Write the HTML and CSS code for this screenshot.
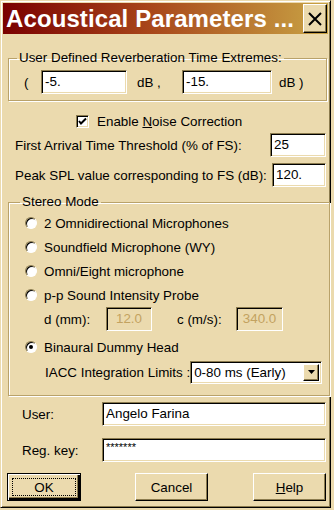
FILE: index.html
```html
<!DOCTYPE html>
<html lang="en">
<head>
    <meta charset="UTF-8">
    <meta name="viewport" content="width=device-width, initial-scale=1.0">
    <title>Acoustical Parameters</title>
    <link rel="stylesheet" href="styles.css">
</head>
<body>
<div class="window">
    <div class="titlebar">
        <span class="title">Acoustical Parameters ...</span>
        <span class="close-btn">
            <svg width="14" height="14" viewBox="0 0 14 14"><path d="M1 1 L13 13 M13 1 L1 13" stroke="#000" stroke-width="2" fill="none"/></svg>
        </span>
    </div>

    <div class="dialog">
        <fieldset class="group reverb">
            <legend>User Defined Reverberation Time Extremes:</legend>
            <div class="reverb-row">
                <span class="paren">(</span>
                <div class="edit rt-min">-5.</div>
                <span class="unit">dB ,</span>
                <div class="edit rt-max">-15.</div>
                <span class="unit unit-last">dB )</span>
            </div>
        </fieldset>

        <div class="check-row">
            <span class="checkbox">
                <svg width="9" height="9" viewBox="0 0 9 9"><path d="M1 4 L3 6.5 L8 1.5" stroke="#000" stroke-width="2" fill="none"/></svg>
            </span>
            <span class="check-label">Enable <u>N</u>oise Correction</span>
        </div>

        <div class="field-row first-row">
            <span>First Arrival Time Threshold (% of FS):</span>
            <div class="edit threshold">25</div>
        </div>
        <div class="field-row second-row">
            <span>Peak SPL value corresponding to FS (dB):</span>
            <div class="edit peak">120.</div>
        </div>

        <fieldset class="group stereo">
            <legend>Stereo Mode</legend>
            <div class="radio-row"><span class="radio"></span><span class="radio-label">2 Omnidirectional Microphones</span></div>
            <div class="radio-row"><span class="radio"></span><span class="radio-label">Soundfield Microphone (WY)</span></div>
            <div class="radio-row"><span class="radio"></span><span class="radio-label">Omni/Eight microphone</span></div>
            <div class="radio-row"><span class="radio"></span><span class="radio-label">p-p Sound Intensity Probe</span></div>
            <div class="probe-row">
                <span class="probe-label">d (mm):</span>
                <div class="edit disabled d-mm">12.0</div>
                <span class="probe-label c-label">c (m/s):</span>
                <div class="edit disabled c-ms">340.0</div>
            </div>
            <div class="radio-row binaural"><span class="radio checked"></span><span class="radio-label">Binaural Dummy Head</span></div>
            <div class="iacc-row">
                <span>IACC Integration Limits :</span>
                <div class="combo">
                    <span class="combo-text">0-80 ms (Early)</span>
                    <span class="combo-btn">
                        <svg width="7" height="4" viewBox="0 0 7 4"><path d="M0 0 H7 L3.5 4 Z" fill="#000"/></svg>
                    </span>
                </div>
            </div>
        </fieldset>

        <div class="field-row user-row">
            <span class="user-label">User:</span>
            <div class="edit user-edit">Angelo Farina</div>
        </div>
        <div class="field-row key-row">
            <span class="user-label">Reg. key:</span>
            <div class="edit user-edit key-edit">*******</div>
        </div>

        <div class="buttons">
            <button class="btn default"><span class="focus">OK</span></button>
            <button class="btn cancel">Cancel</button>
            <button class="btn help"><u>H</u>elp</button>
        </div>
    </div>
</div>
</body>
</html>
```

FILE: styles.css
```css
body {
    margin: 0;
    background: #ebdaae;
    font-family: 'Liberation Sans', Arial, sans-serif;
    font-size: 13.4px;
    color: #000;
    white-space: nowrap;
}

.window {
    width: 331px;
    height: 508px;
    box-sizing: border-box;
    border: 1px solid;
    border-color: #ebdaae #000 #000 #ebdaae;
    box-shadow: inset 1px 1px 0 #fff, inset -1px -1px 0 #8b7b4e;
    padding: 2px;
}

/* Title bar */
.titlebar {
    height: 31px;
    display: flex;
    align-items: center;
    padding-left: 3px;
    background: linear-gradient(to right, #7a0000, #a8461a 45%, #c9a445);
}

.title {
    flex: 1;
    color: #fff;
    font-weight: bold;
    font-size: 24px;
    letter-spacing: 0.1px;
}

.close-btn {
    width: 24px;
    height: 29px;
    box-sizing: border-box;
    margin-right: 1px;
    display: flex;
    align-items: center;
    justify-content: center;
    background: #ebdaae;
    border: 1px solid;
    border-color: #fff #000 #000 #fff;
    box-shadow: inset -1px -1px 0 #8b7b4e;
}

.dialog {
    display: flex;
    flex-direction: column;
}

/* Group boxes */
.group {
    margin: 0 1px 0 5px;
    padding: 0;
    border: 1px solid #b9a26a;
    box-shadow: inset 1px 1px 0 #fff, 1px 1px 0 #fff;
}

.group legend {
    margin-left: 8px;
    padding: 0 2px;
    line-height: 16px;
}

.reverb {
    margin-top: 16px;
    padding: 4px 0 6px;
}

.reverb-row {
    display: flex;
    align-items: center;
    height: 24px;
}

.paren {
    width: 17px;
    margin-left: 15px;
}

.unit {
    width: 45px;
    padding-left: 10px;
}

.unit-last {
    padding-left: 7px;
}

/* Edit boxes */
.edit {
    box-sizing: border-box;
    height: 24px;
    padding: 2px 3px;
    line-height: 18px;
    background: #fff;
    border: 1px solid;
    border-color: #8b7b4e #fff #fff #8b7b4e;
    box-shadow: inset 1px 1px 0 #000, inset -1px -1px 0 #ebdaae;
    overflow: hidden;
}

.rt-min { width: 86px; }
.rt-max { width: 90px; }
.threshold { width: 56px; }
.peak { width: 54px; }

.edit.disabled {
    background: #ebdaae;
    color: #c3a260;
    text-align: center;
}

/* Checkbox */
.check-row {
    display: flex;
    align-items: center;
    height: 16px;
    margin-top: 12px;
    padding-left: 73px;
}

.checkbox {
    width: 13px;
    height: 13px;
    box-sizing: border-box;
    display: flex;
    align-items: center;
    justify-content: center;
    background: #fff;
    border: 1px solid;
    border-color: #8b7b4e #fff #fff #8b7b4e;
    box-shadow: inset 1px 1px 0 #000, inset -1px -1px 0 #ebdaae;
}

.check-label {
    margin-left: 8px;
}

/* Label + edit rows */
.field-row {
    display: flex;
    align-items: center;
    justify-content: space-between;
    padding: 0 2px 0 12px;
}

.first-row { margin-top: 4px; }
.second-row { margin-top: 6px; }

/* Stereo mode */
.stereo {
    margin-top: 7px;
    padding: 1px 0 11px;
}

.stereo legend {
    margin-left: 11px;
}

.radio-row {
    display: flex;
    align-items: center;
    height: 24px;
    padding-left: 16px;
}

.radio {
    width: 12px;
    height: 12px;
    box-sizing: border-box;
    border-radius: 50%;
    background: #fff;
    border: 1px solid;
    border-color: #8b7b4e #fff #fff #8b7b4e;
    box-shadow: inset 1px 1px 0 #000;
    position: relative;
}

.radio.checked::after {
    content: "";
    position: absolute;
    left: 3px;
    top: 3px;
    width: 4px;
    height: 4px;
    border-radius: 50%;
    background: #000;
}

.radio-label {
    margin-left: 7px;
}

.probe-row {
    display: flex;
    align-items: center;
    height: 24px;
    padding-left: 35px;
}

.probe-label {
    width: 62px;
}

.c-label {
    margin-left: 25px;
    width: 59px;
}

.d-mm { width: 46px; }
.c-ms { width: 47px; }

.binaural {
    margin-top: 4px;
}

.iacc-row {
    display: flex;
    align-items: center;
    height: 24px;
    margin-top: 1px;
    padding-left: 36px;
}

.combo {
    width: 132px;
    height: 23px;
    margin-left: auto;
    margin-right: 7px;
    box-sizing: border-box;
    display: flex;
    align-items: center;
    background: #fff;
    border: 1px solid;
    border-color: #8b7b4e #fff #fff #8b7b4e;
    box-shadow: inset 1px 1px 0 #000, inset -1px -1px 0 #ebdaae;
    padding: 2px;
}

.combo-text {
    flex: 1;
    padding-left: 1px;
}

.combo-btn {
    width: 16px;
    height: 17px;
    box-sizing: border-box;
    display: flex;
    align-items: center;
    justify-content: center;
    background: #ebdaae;
    border: 1px solid;
    border-color: #fff #000 #000 #fff;
    box-shadow: inset -1px -1px 0 #8b7b4e;
}

/* User info */
.user-row { margin-top: 6px; padding-left: 19px; }
.key-row { margin-top: 12px; padding-left: 19px; }

.user-edit { width: 224px; }

.key-edit {
    font-size: 11px;
    line-height: 12px;
}

/* Buttons */
.buttons {
    display: flex;
    margin-top: 11px;
    padding-left: 4px;
}

.btn {
    height: 28px;
    width: 73px;
    padding: 0;
    font-family: inherit;
    font-size: 13.4px;
    color: #000;
    background: #ebdaae;
    border: 1px solid;
    border-color: #fff #000 #000 #fff;
    box-shadow: inset -1px -1px 0 #8b7b4e;
}

.btn.default {
    width: 74px;
    border: 1px solid #000;
    box-shadow: inset 1px 1px 0 #fff, inset -2px -2px 0 #000, inset -3px -3px 0 #8b7b4e;
    display: flex;
    padding: 4px;
}

.focus {
    flex: 1;
    display: flex;
    align-items: center;
    justify-content: center;
    border: 1px dotted #000;
}

.cancel { margin-left: 54px; }
.help { margin-left: 45px; }
```
